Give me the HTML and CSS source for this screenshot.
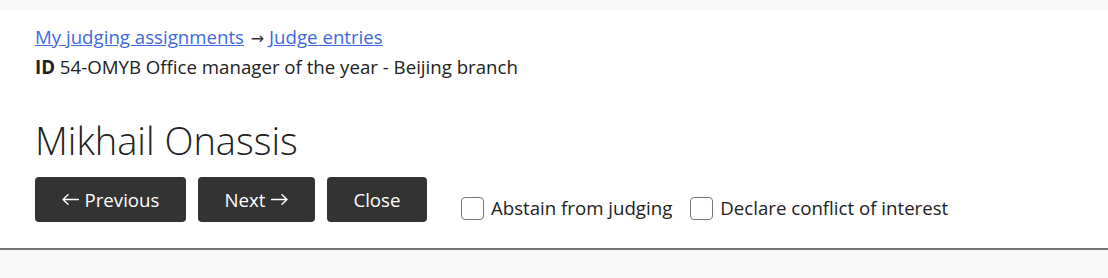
FILE: index.html
```html
<!DOCTYPE html>
<html lang="en">
<head>
<meta charset="utf-8">
<title>Judge entry</title>
<link rel="stylesheet" href="styles.css">
</head>
<body>
<div class="panel">
  <div class="crumbs">
    <div><a href="#">My judging assignments</a> <span class="sep">→</span> <a href="#">Judge entries</a></div>
    <div><strong>ID</strong> 54-OMYB Office manager of the year - Beijing branch</div>
  </div>
  <h1 class="title">Mikhail Onassis</h1>
  <div class="actions">
    <button class="btn" type="button"><svg class="arrow" viewBox="0 0 17 11" width="17" height="11" aria-hidden="true"><path d="M16.5 5.5H1M6 0.8L1 5.5L6 10.2"/></svg><span>Previous</span></button>
    <button class="btn" type="button"><span>Next</span><svg class="arrow" viewBox="0 0 17 11" width="17" height="11" aria-hidden="true"><path d="M0.5 5.5H16M11 0.8L16 5.5L11 10.2"/></svg></button>
    <button class="btn" type="button"><span>Close</span></button>
    <div class="checks">
      <label class="check"><input type="checkbox"><span>Abstain from judging</span></label>
      <label class="check"><input type="checkbox"><span>Declare conflict of interest</span></label>
    </div>
  </div>
</div>
</body>
</html>
```

FILE: styles.css
```css
html, body {
  margin: 0;
  padding: 0;
}
body {
  background: #f8f8f8;
  padding-top: 10px;
  font-family: "Open Sans", "Liberation Sans", sans-serif;
  color: #222;
}
.panel {
  background: #fff;
  border-bottom: 2px solid #757575;
  padding: 13px 35px 26px;
}
.crumbs {
  font-size: 18.67px;
  line-height: 28px;
  color: #222;
}
.crumbs a {
  color: #4169e1;
  text-decoration: underline;
}
.crumbs .sep {
  font-family: "DejaVu Sans", sans-serif;
  font-size: 16px;
  margin-left: 2px;
  color: #333;
}
.crumbs strong {
  font-weight: 700;
}
.title {
  margin: 36px 0 0;
  font-size: 38px;
  font-weight: 300;
  line-height: 46px;
  color: #222;
}
.actions {
  display: flex;
  align-items: flex-start;
  gap: 12px;
  margin-top: 14px;
}
.btn {
  display: inline-flex;
  align-items: center;
  gap: 6px;
  height: 45px;
  padding: 0 26.5px;
  border: 0;
  border-radius: 4px;
  background: #333;
  color: #fff;
  font-family: inherit;
  font-size: 18.67px;
  cursor: pointer;
}
.arrow {
  display: block;
  fill: none;
  stroke: #fff;
  stroke-width: 1.4;
  stroke-linecap: round;
  stroke-linejoin: round;
}
.checks {
  display: flex;
  gap: 18px;
  margin-left: 22px;
  margin-top: 19px;
}
.check {
  display: flex;
  align-items: center;
  gap: 7px;
  font-size: 18.67px;
  line-height: 24px;
  color: #222;
}
.check input {
  appearance: none;
  -webkit-appearance: none;
  margin: 0;
  width: 23px;
  height: 23px;
  border: 1px solid #777;
  border-radius: 4px;
  background: #fff;
}
```
